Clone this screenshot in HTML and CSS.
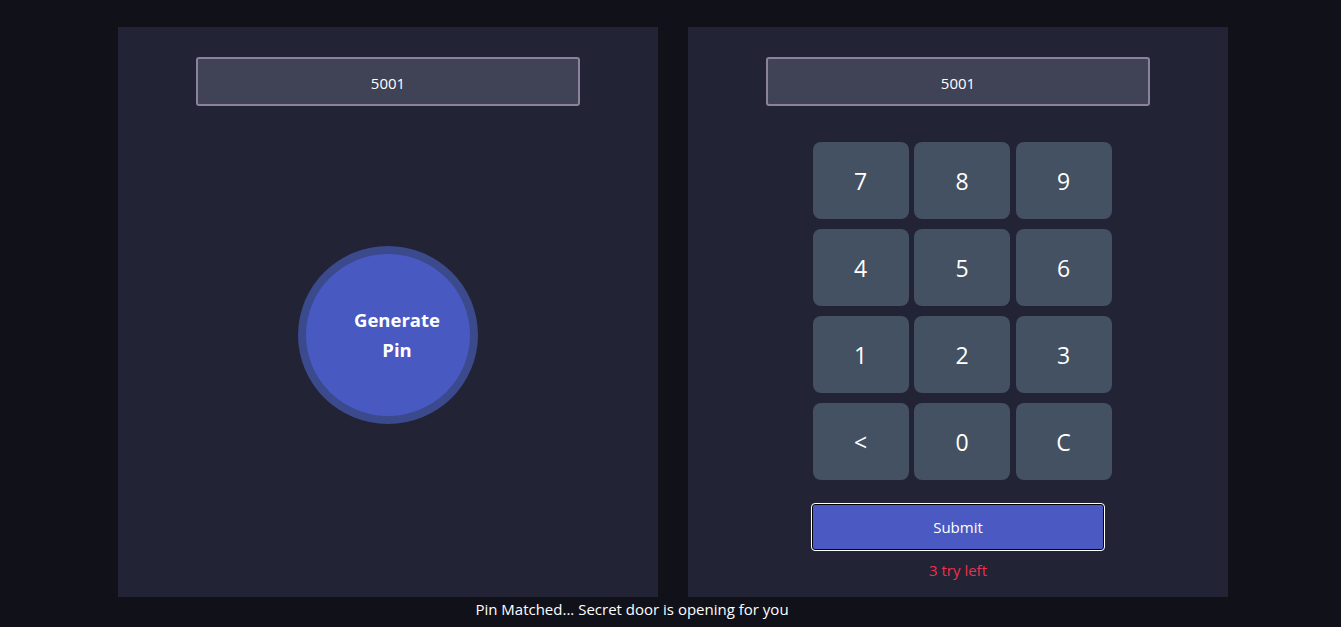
FILE: index.html
```html
<!DOCTYPE html>
<html>
<head>
<meta charset="utf-8">
<link rel="stylesheet" href="styles.css">
</head>
<body>
<div class="page">
  <div class="panels">
    <section class="panel generator">
      <div class="display">5001</div>
      <button class="generate"><span>Generate<br>Pin</span></button>
    </section>
    <section class="panel matcher">
      <div class="display">5001</div>
      <div class="keypad">
        <button class="key">7</button>
        <button class="key">8</button>
        <button class="key">9</button>
        <button class="key">4</button>
        <button class="key">5</button>
        <button class="key">6</button>
        <button class="key">1</button>
        <button class="key">2</button>
        <button class="key">3</button>
        <button class="key">&lt;</button>
        <button class="key">0</button>
        <button class="key">C</button>
      </div>
      <button class="submit">Submit</button>
      <p class="tries">3 try left</p>
    </section>
  </div>
  <p class="notify">Pin Matched... Secret door is opening for you</p>
</div>
</body>
</html>
```
FILE: styles.css
```css
html, body {
  margin: 0;
  padding: 0;
  background: #11111a;
  font-family: "Open Sans", "Noto Sans", sans-serif;
  color: #fff;
  height: 100%;
  overflow: hidden;
}
.page {
  padding-top: 27px;
}
.panels {
  display: flex;
  gap: 30px;
  padding-left: 118px;
}
.panel {
  width: 540px;
  height: 570px;
  background: #222335;
  display: flex;
  flex-direction: column;
  align-items: center;
  box-sizing: border-box;
  padding-top: 30px;
}
.display {
  width: 384px;
  height: 49px;
  box-sizing: border-box;
  border: 2px solid #8a839b;
  border-radius: 3px;
  background: #404256;
  display: flex;
  align-items: center;
  justify-content: center;
  padding-top: 3px;
  font-size: 15px;
  color: #fff;
}
.generate {
  margin-top: 140px;
  width: 180px;
  height: 178px;
  border-radius: 50%;
  border: 8px solid #3b4a8d;
  background: #4959c2;
  color: #fff;
  font-family: inherit;
  font-size: 18.5px;
  font-weight: 700;
  line-height: 30px;
  padding: 0 0 0 18px;
  text-align: center;
  box-sizing: border-box;
}
.keypad {
  margin-top: 36px;
  margin-left: 8px;
  display: grid;
  grid-template-columns: repeat(3, 96px);
  grid-auto-rows: 77px;
  column-gap: 5.5px;
  row-gap: 10px;
}
.key {
  border: none;
  border-radius: 8px;
  background: #445162;
  color: #fff;
  font-family: inherit;
  font-size: 23px;
  padding: 0;
}
.submit {
  margin-top: 23px;
  width: 294px;
  height: 48px;
  box-sizing: border-box;
  border: 1px solid #fff;
  box-shadow: inset 0 0 0 1px #000;
  border-radius: 4px;
  background: #4a5ac2;
  color: #fff;
  font-family: inherit;
  font-size: 15px;
  padding: 0;
}
.tries {
  margin: 8px 0 0;
  color: #e8334f;
  font-size: 15px;
  line-height: 22px;
}
.notify {
  margin: 2px 0 0;
  width: 1264px;
  text-align: center;
  font-size: 15px;
  line-height: 20px;
}
```
